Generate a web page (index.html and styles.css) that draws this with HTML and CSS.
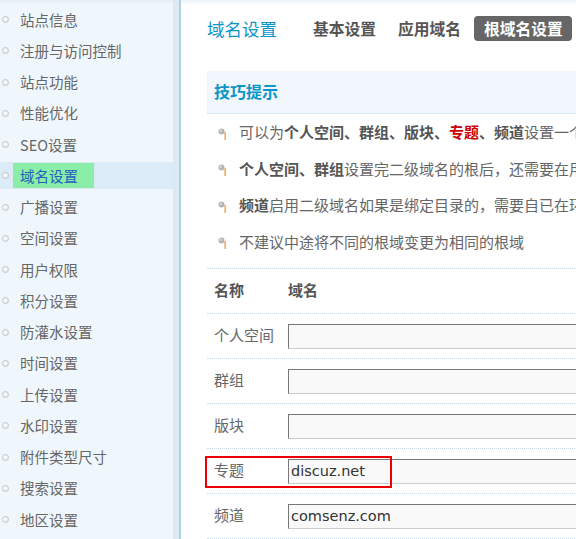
FILE: index.html
```html
<!DOCTYPE html>
<html>
<head>
    <meta charset="utf-8">
    <link rel="stylesheet" href="styles.css">
</head>
<body>
    <div class="frame">
        <div class="side">
            <ul class="menu">
                <li><a>站点信息</a></li>
                <li><a>注册与访问控制</a></li>
                <li><a>站点功能</a></li>
                <li><a>性能优化</a></li>
                <li><a>SEO设置</a></li>
                <li class="on"><a>域名设置</a></li>
                <li><a>广播设置</a></li>
                <li><a>空间设置</a></li>
                <li><a>用户权限</a></li>
                <li><a>积分设置</a></li>
                <li><a>防灌水设置</a></li>
                <li><a>时间设置</a></li>
                <li><a>上传设置</a></li>
                <li><a>水印设置</a></li>
                <li><a>附件类型尺寸</a></li>
                <li><a>搜索设置</a></li>
                <li><a>地区设置</a></li>
            </ul>
        </div>
        <div class="edge"></div>
        <div class="main">
            <div class="itemtitle">
                <h3>域名设置</h3>
                <ul class="tab">
                    <li>基本设置</li>
                    <li>应用域名</li>
                    <li class="current">根域名设置</li>
                </ul>
            </div>

            <div class="tips">
                <div class="tips-head">技巧提示</div>
                <ul class="tips-list">
                    <li>
                        <svg class="pin" width="10" height="12" viewBox="0 0 10 12"><circle cx="3.5" cy="3.5" r="3" fill="#b4b4b4"/><circle cx="2.8" cy="2.8" r="1.2" fill="#d8d8d8"/><rect x="6.5" y="4" width="1.2" height="8" fill="#f0902a"/></svg>
                        <span>可以为<b>个人空间、群组、版块、</b><b class="red">专题</b><b>、频道</b>设置一个根域名</span>
                    </li>
                    <li>
                        <svg class="pin" width="10" height="12" viewBox="0 0 10 12"><circle cx="3.5" cy="3.5" r="3" fill="#b4b4b4"/><circle cx="2.8" cy="2.8" r="1.2" fill="#d8d8d8"/><rect x="6.5" y="4" width="1.2" height="8" fill="#f0902a"/></svg>
                        <span><b>个人空间、群组</b>设置完二级域名的根后，还需要在用户组中开启</span>
                    </li>
                    <li>
                        <svg class="pin" width="10" height="12" viewBox="0 0 10 12"><circle cx="3.5" cy="3.5" r="3" fill="#b4b4b4"/><circle cx="2.8" cy="2.8" r="1.2" fill="#d8d8d8"/><rect x="6.5" y="4" width="1.2" height="8" fill="#f0902a"/></svg>
                        <span><b>频道</b>启用二级域名如果是绑定目录的，需要自已在环境中绑定</span>
                    </li>
                    <li>
                        <svg class="pin" width="10" height="12" viewBox="0 0 10 12"><circle cx="3.5" cy="3.5" r="3" fill="#b4b4b4"/><circle cx="2.8" cy="2.8" r="1.2" fill="#d8d8d8"/><rect x="6.5" y="4" width="1.2" height="8" fill="#f0902a"/></svg>
                        <span>不建议中途将不同的根域变更为相同的根域</span>
                    </li>
                </ul>
            </div>

            <div class="tb">
                <div class="row header">
                    <div class="label">名称</div>
                    <div class="value">域名</div>
                </div>
                <div class="row">
                    <div class="label">个人空间</div>
                    <input class="txt" type="text" value="">
                </div>
                <div class="row">
                    <div class="label">群组</div>
                    <input class="txt" type="text" value="">
                </div>
                <div class="row">
                    <div class="label">版块</div>
                    <input class="txt" type="text" value="">
                </div>
                <div class="row">
                    <div class="label">专题</div>
                    <input class="txt" type="text" value="discuz.net">
                    <div class="mark"></div>
                </div>
                <div class="row">
                    <div class="label">频道</div>
                    <input class="txt" type="text" value="comsenz.com">
                </div>
            </div>
        </div>
    </div>
</body>
</html>
```

FILE: styles.css
```css
html, body {
    margin: 0;
    padding: 0;
    width: 576px;
    height: 539px;
    overflow: hidden;
    background: #fff;
}
body {
    font-family: "Noto Sans CJK SC", "DejaVu Sans", sans-serif;
    color: #666;
}
ul {
    list-style: none;
    margin: 0;
    padding: 0;
}
.frame {
    display: flex;
    height: 539px;
}

/* left menu */
.side {
    flex: none;
    width: 173px;
    padding-top: 6px;
    background: linear-gradient(#e4eef7 0, #f0f7fc 4px);
}
.menu li {
    position: relative;
    display: flex;
    align-items: center;
    height: 27px;
    margin-bottom: 4.25px;
    padding-left: 20px;
    font-size: 14.5px;
    line-height: 25px;
}
.menu li::before {
    content: "";
    position: absolute;
    left: 2px;
    top: 10px;
    width: 5px;
    height: 5px;
    border: 1px solid #c4c4c4;
    border-radius: 50%;
    background: radial-gradient(circle at 40% 40%, #fff, #e2e2e2);
}
.menu li a {
    color: #666;
    padding-bottom: 1px;
}
.menu li.on {
    background: #dcebf8;
}
.menu li.on a {
    display: block;
    height: 25px;
    margin-left: -7px;
    padding: 0 16px 0 7px;
    background: #8aeea8;
    color: #1f5fbf;
}
.edge {
    flex: none;
    width: 6px;
    background: #dbe9f5;
    border-right: 2px solid #b2d0e3;
}

/* main area */
.main {
    flex: none;
    width: 760px;
    padding-left: 26px;
    background: linear-gradient(#eaf3fa 0, #fff 5px);
}
.itemtitle {
    display: flex;
    align-items: center;
    height: 25px;
    padding-top: 16px;
}
.itemtitle h3 {
    margin: 0;
    font-size: 17.5px;
    font-weight: normal;
    line-height: 25px;
    color: #0a96c9;
}
.tab {
    display: flex;
    margin-left: 36px;
}
.tab li {
    font-size: 15.75px;
    font-weight: bold;
    line-height: 25px;
    color: #555;
}
.tab li + li {
    margin-left: 22px;
}
.tab li.current {
    margin-left: 13px;
    padding: 0 9px 0 10px;
    border-radius: 4px;
    background: #666;
    color: #fff;
}

.tips {
    margin-top: 30px;
}
.tips-head {
    height: 42px;
    padding-left: 7px;
    background: #f1f7fc;
    border-bottom: 1px dotted #c5d9e8;
    font-size: 16px;
    font-weight: bold;
    line-height: 41px;
    color: #0a96c9;
}
.tips-list {
    padding-bottom: 8px;
    border-bottom: 1px dotted #c5d9e8;
}
.tips-list li {
    display: flex;
    align-items: center;
    height: 36.5px;
    white-space: nowrap;
    font-size: 15px;
    line-height: 20px;
}
.pin {
    flex: none;
    margin: 3px 11px 0 11px;
}
.tips-list b {
    color: #555;
}
.tips-list b.red {
    color: #cc0000;
}

.row {
    position: relative;
    display: flex;
    align-items: center;
    height: 44px;
    border-bottom: 1px dotted #c5d9e8;
    font-size: 15px;
}
.row .label,
.row .value {
    padding-bottom: 4px;
}
.row .label {
    flex: none;
    width: 81px;
    padding-left: 7px;
    box-sizing: border-box;
}
.row.header {
    font-weight: bold;
    color: #555;
}
.txt {
    box-sizing: border-box;
    width: 420px;
    height: 25px;
    margin: 0;
    padding: 0 2px;
    border: 1px solid #ccc;
    border-top-color: #777;
    border-left-color: #777;
    background: #f9f9f9;
    font-family: "DejaVu Sans", sans-serif;
    font-size: 14.5px;
    color: #333;
    outline: none;
}
.mark {
    position: absolute;
    left: -2px;
    top: 7px;
    width: 183px;
    height: 28px;
    border: 2px solid #ee0000;
}
```
